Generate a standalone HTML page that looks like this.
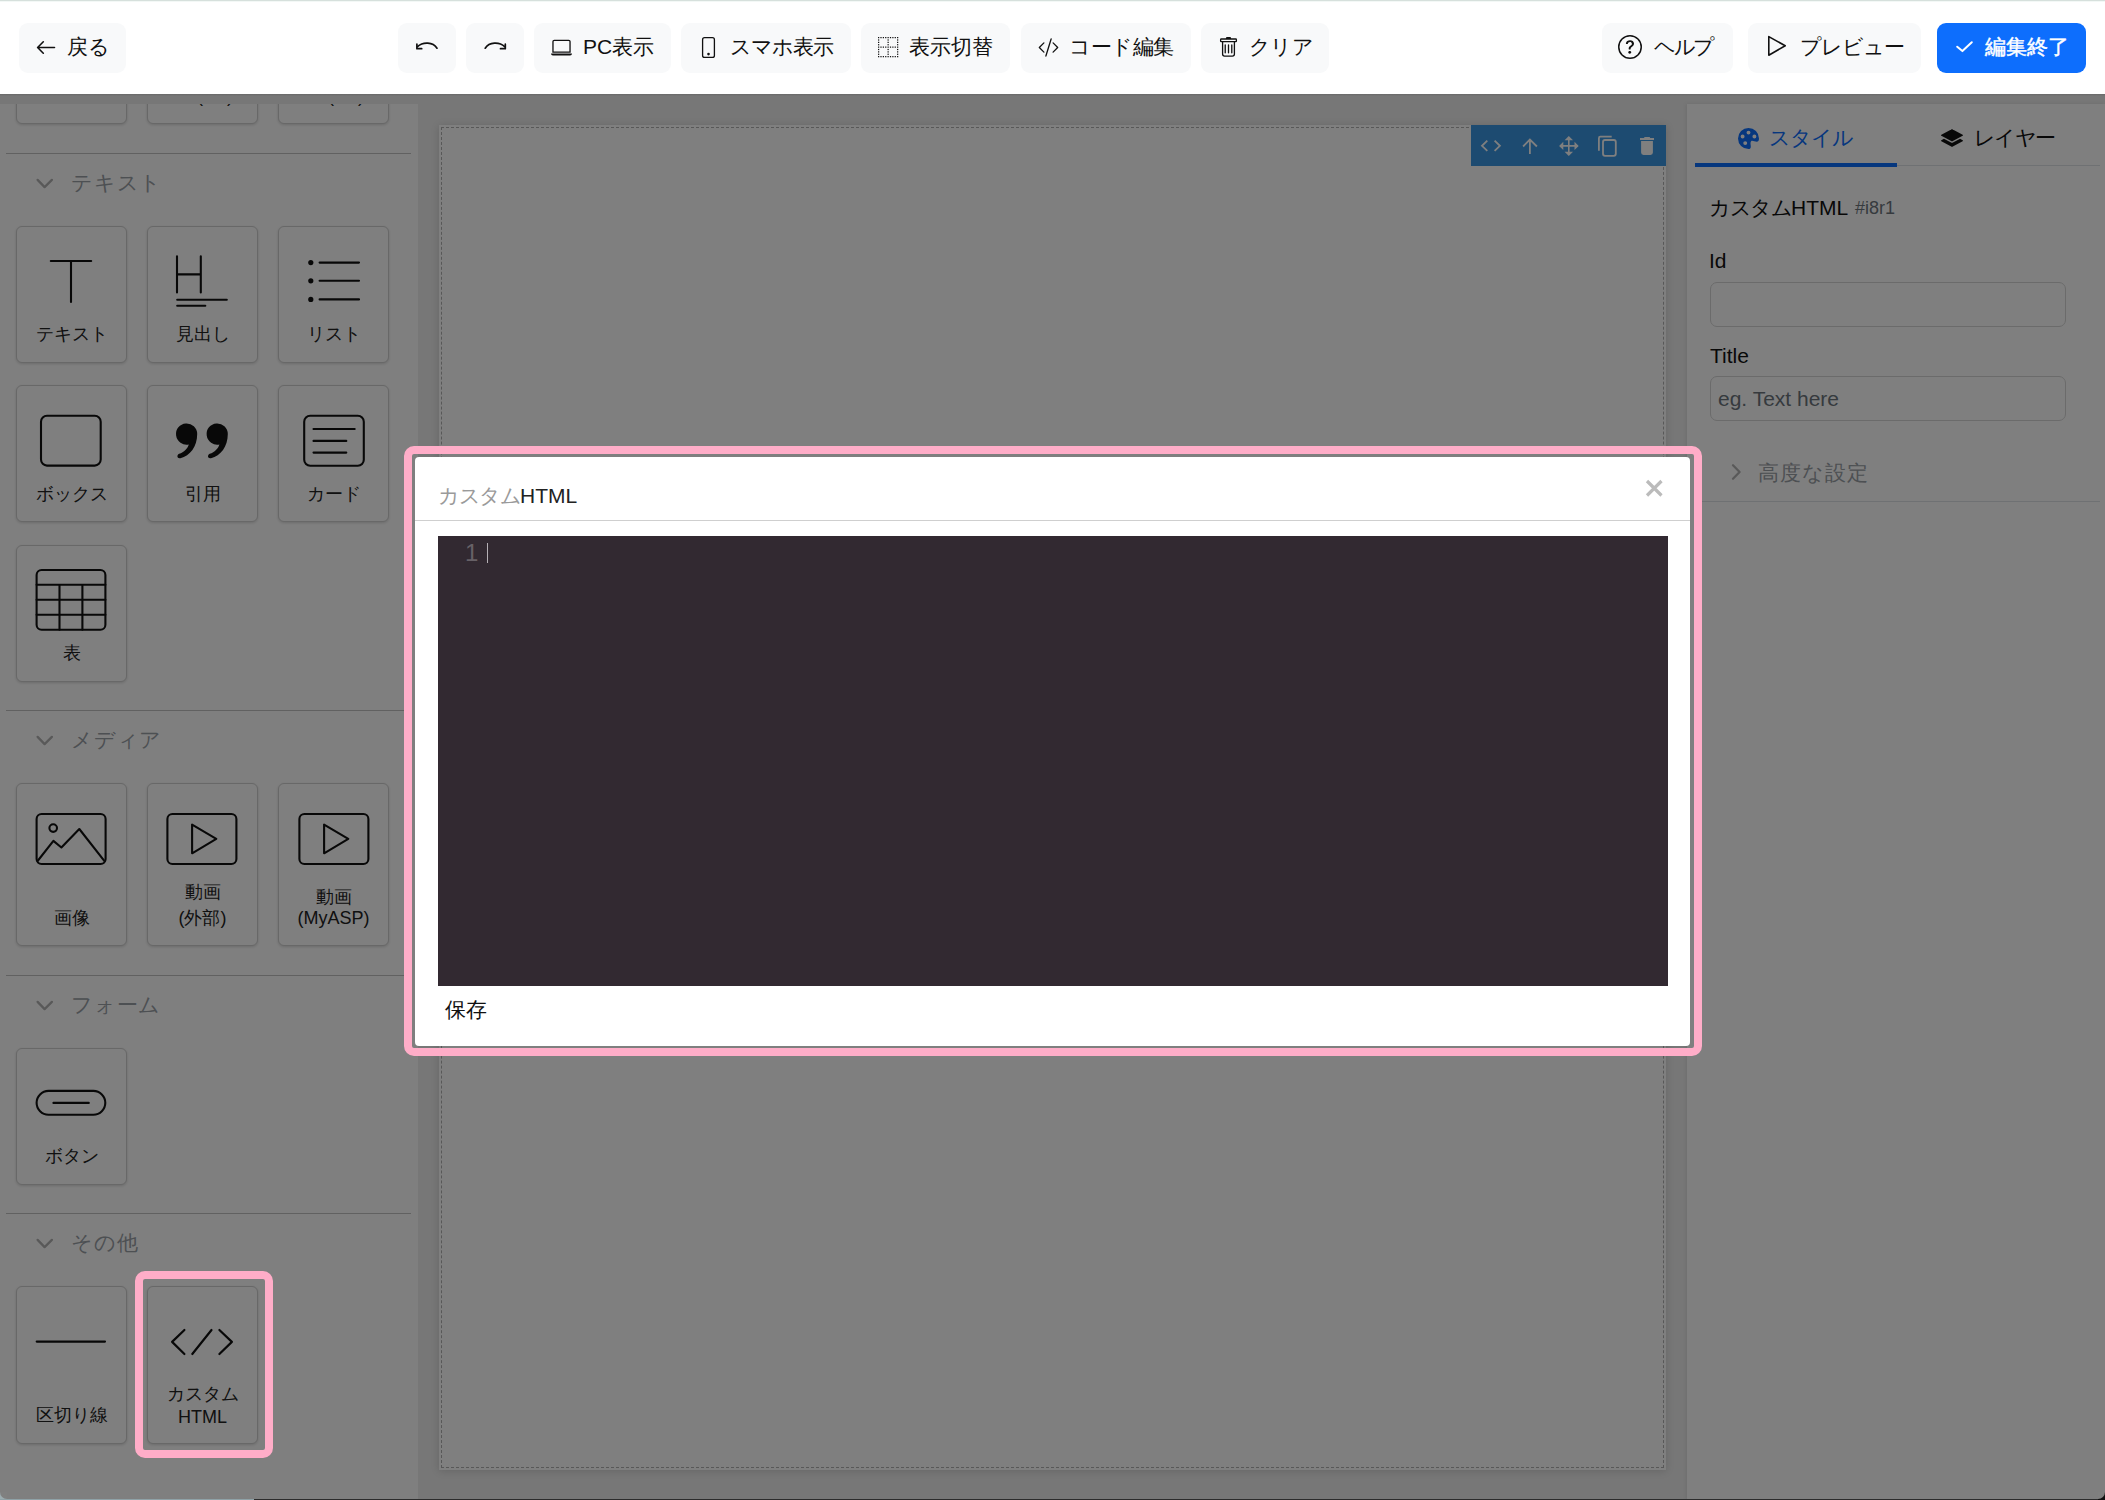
<!DOCTYPE html>
<html lang="ja">
<head>
<meta charset="utf-8">
<style>
*{box-sizing:border-box;margin:0;padding:0}
html,body{width:2105px;height:1500px;overflow:hidden}
body{position:relative;background:#eeeeee;font-family:"Liberation Sans",sans-serif;color:#212529}
.abs{position:absolute}
/* header */
#topline{position:absolute;left:0;top:0;width:2105px;height:2px;background:linear-gradient(#d6e0dc 0,#d6e0dc 1px,#f3f8f6 1px);z-index:5}
#header{position:absolute;left:0;top:0;width:2105px;height:94px;background:#fff}
.btn{position:absolute;top:23px;height:50px;background:#f8f9fa;border-radius:9px}
.btxt{position:absolute;font-size:21px;line-height:24px;white-space:nowrap;color:#111}
.btn svg{position:absolute}
/* sidebar */
#sidebar{position:absolute;left:0;top:104px;width:418px;height:1396px;background:#fff}
.sep{position:absolute;left:6px;width:405px;height:1px;background:#c2c2c2}
.cat{position:absolute;left:71px;letter-spacing:.8px;font-size:21px;line-height:24px;color:#9aa0a6;white-space:nowrap}
.chev{position:absolute;left:36px}
.card{position:absolute;width:111px;background:#fff;border:1px solid #d0d0d0;border-radius:6px;box-shadow:0 1px 3px rgba(0,0,0,.16)}
.lbl{position:absolute;left:0;width:111px;text-align:center;font-size:18px;line-height:22px;color:#222;white-space:nowrap}
.card svg{position:absolute}
/* canvas */
#frame{position:absolute;left:439px;top:125px;width:1227px;height:1345px;background:#fff;box-shadow:0 1px 8px rgba(0,0,0,.15)}
#frame .dash{position:absolute;left:2px;top:2px;right:2px;bottom:2px;border:1px dashed #b0b0b0}
#tb{position:absolute;left:1471px;top:125px;width:195px;height:41px;background:#3b97e3}
#tb svg{position:absolute}
/* right panel */
#rpanel{position:absolute;left:1687px;top:104px;width:418px;height:1396px;background:#fff;box-shadow:-1px 0 4px rgba(0,0,0,.08)}
.inp{position:absolute;left:1710px;width:356px;height:45px;border:1px solid #d6d6d6;border-radius:7px;background:#fff}
/* overlay */
#overlay{position:absolute;left:0;top:94px;width:2105px;height:1406px;background:rgba(0,0,0,.5)}
#hshadow{position:absolute;left:0;top:94px;width:2105px;height:2px;background:linear-gradient(rgba(0,0,0,.12),rgba(0,0,0,0))}
/* modal */
#modal{position:absolute;left:415px;top:457px;width:1275px;height:589px;background:#fff;border-radius:4px}
#editor{position:absolute;left:438px;top:536px;width:1230px;height:450px;background:#322931}
.pink{position:absolute;border:8px solid #ffadc8;border-radius:10px}
</style>
</head>
<body>
<div id="topline"></div>
<div id="header">
 <div class="btn" style="left:19px;width:107px"></div>
 <svg class="abs" style="left:36px;top:40px" width="21" height="15" viewBox="0 0 21 15"><path d="M18.5 7.5H1.8M7.3 1.8L1.6 7.5L7.3 13.2" fill="none" stroke="#111" stroke-width="1.6" stroke-linecap="round" stroke-linejoin="round"/></svg>
 <div class="btxt" style="left:67px;top:35px">戻る</div>

 <div class="btn" style="left:398px;width:58px"></div>
 <svg class="abs" style="left:410px;top:35px" width="32" height="20" viewBox="0 0 32 20"><path d="M27 13.2C23 7 13 6.5 7.5 11.7" fill="none" stroke="#111" stroke-width="1.7" stroke-linecap="round"/><path d="M6.9 9.2V13.7H11.7" fill="none" stroke="#111" stroke-width="1.7" stroke-linecap="round" stroke-linejoin="round"/></svg>
 <div class="btn" style="left:466px;width:58px"></div>
 <svg class="abs" style="left:478px;top:35px" width="32" height="20" viewBox="0 0 32 20"><path d="M7.2 13.2C11.2 7 21.2 6.5 26.7 11.7" fill="none" stroke="#111" stroke-width="1.7" stroke-linecap="round"/><path d="M27.3 9.2V13.7H22.5" fill="none" stroke="#111" stroke-width="1.7" stroke-linecap="round" stroke-linejoin="round"/></svg>

 <div class="btn" style="left:534px;width:137px"></div>
 <svg class="abs" style="left:551.3px;top:37.1px" width="21" height="21" viewBox="0 0 16 16" fill="#111"><path d="M13.5 3a.5.5 0 0 1 .5.5V11H2V3.5a.5.5 0 0 1 .5-.5zm-11-1A1.5 1.5 0 0 0 1 3.5V12h14V3.5A1.5 1.5 0 0 0 13.5 2zM0 12.5h16a1.5 1.5 0 0 1-1.5 1.5h-13A1.5 1.5 0 0 1 0 12.5"/></svg>
 <div class="btxt" style="left:583px;top:35px">PC表示</div>

 <div class="btn" style="left:681px;width:170px"></div>
 <svg class="abs" style="left:698px;top:37px" width="21" height="21" viewBox="0 0 16 16" fill="#111"><path d="M11 1a1 1 0 0 1 1 1v12a1 1 0 0 1-1 1H5a1 1 0 0 1-1-1V2a1 1 0 0 1 1-1zM5 0a2 2 0 0 0-2 2v12a2 2 0 0 0 2 2h6a2 2 0 0 0 2-2V2a2 2 0 0 0-2-2z"/><path d="M8 14a1 1 0 1 0 0-2 1 1 0 0 0 0 2"/></svg>
 <div class="btxt" style="left:730px;top:35px;letter-spacing:-1px">スマホ表示</div>

 <div class="btn" style="left:861px;width:149px"></div>
 <svg class="abs" style="left:877.8px;top:37.2px" width="21" height="21" viewBox="0 0 16 16" fill="#111" id="gridic"><rect x="0.000" y="0.000" width=".94" height=".94"/><rect x="1.812" y="0.000" width=".94" height=".94"/><rect x="3.625" y="0.000" width=".94" height=".94"/><rect x="5.438" y="0.000" width=".94" height=".94"/><rect x="7.250" y="0.000" width=".94" height=".94"/><rect x="9.062" y="0.000" width=".94" height=".94"/><rect x="10.875" y="0.000" width=".94" height=".94"/><rect x="12.688" y="0.000" width=".94" height=".94"/><rect x="14.500" y="0.000" width=".94" height=".94"/><rect x="0.000" y="1.812" width=".94" height=".94"/><rect x="7.250" y="1.812" width=".94" height=".94"/><rect x="14.500" y="1.812" width=".94" height=".94"/><rect x="0.000" y="3.625" width=".94" height=".94"/><rect x="7.250" y="3.625" width=".94" height=".94"/><rect x="14.500" y="3.625" width=".94" height=".94"/><rect x="0.000" y="5.438" width=".94" height=".94"/><rect x="7.250" y="5.438" width=".94" height=".94"/><rect x="14.500" y="5.438" width=".94" height=".94"/><rect x="0.000" y="7.250" width=".94" height=".94"/><rect x="1.812" y="7.250" width=".94" height=".94"/><rect x="3.625" y="7.250" width=".94" height=".94"/><rect x="5.438" y="7.250" width=".94" height=".94"/><rect x="7.250" y="7.250" width=".94" height=".94"/><rect x="9.062" y="7.250" width=".94" height=".94"/><rect x="10.875" y="7.250" width=".94" height=".94"/><rect x="12.688" y="7.250" width=".94" height=".94"/><rect x="14.500" y="7.250" width=".94" height=".94"/><rect x="0.000" y="9.062" width=".94" height=".94"/><rect x="7.250" y="9.062" width=".94" height=".94"/><rect x="14.500" y="9.062" width=".94" height=".94"/><rect x="0.000" y="10.875" width=".94" height=".94"/><rect x="7.250" y="10.875" width=".94" height=".94"/><rect x="14.500" y="10.875" width=".94" height=".94"/><rect x="0.000" y="12.688" width=".94" height=".94"/><rect x="7.250" y="12.688" width=".94" height=".94"/><rect x="14.500" y="12.688" width=".94" height=".94"/><rect x="0.000" y="14.500" width=".94" height=".94"/><rect x="1.812" y="14.500" width=".94" height=".94"/><rect x="3.625" y="14.500" width=".94" height=".94"/><rect x="5.438" y="14.500" width=".94" height=".94"/><rect x="7.250" y="14.500" width=".94" height=".94"/><rect x="9.062" y="14.500" width=".94" height=".94"/><rect x="10.875" y="14.500" width=".94" height=".94"/><rect x="12.688" y="14.500" width=".94" height=".94"/><rect x="14.500" y="14.500" width=".94" height=".94"/></svg>
 <div class="btxt" style="left:909px;top:35px">表示切替</div>

 <div class="btn" style="left:1021px;width:170px"></div>
 <svg class="abs" style="left:1037.5px;top:36.9px" width="21" height="21" viewBox="0 0 16 16" fill="#111"><path d="M10.478 1.647a.5.5 0 1 0-.956-.294l-4 13a.5.5 0 0 0 .956.294zM4.854 4.146a.5.5 0 0 1 0 .708L1.707 8l3.147 3.146a.5.5 0 0 1-.708.708l-3.5-3.5a.5.5 0 0 1 0-.708l3.5-3.5a.5.5 0 0 1 .708 0m6.292 0a.5.5 0 0 0 0 .708L14.293 8l-3.147 3.146a.5.5 0 0 0 .708.708l3.5-3.5a.5.5 0 0 0 0-.708l-3.5-3.5a.5.5 0 0 0-.708 0"/></svg>
 <div class="btxt" style="left:1069px;top:35px;letter-spacing:-.5px">コード編集</div>

 <div class="btn" style="left:1201px;width:128px"></div>
 <svg class="abs" style="left:1217.8px;top:37px" width="21" height="21" viewBox="0 0 16 16" fill="#111"><path d="M5.5 5.5A.5.5 0 0 1 6 6v6a.5.5 0 0 1-1 0V6a.5.5 0 0 1 .5-.5m2.5 0a.5.5 0 0 1 .5.5v6a.5.5 0 0 1-1 0V6a.5.5 0 0 1 .5-.5m3 .5a.5.5 0 0 0-1 0v6a.5.5 0 0 0 1 0z"/><path d="M14.5 3a1 1 0 0 1-1 1H13v9a2 2 0 0 1-2 2H5a2 2 0 0 1-2-2V4h-.5a1 1 0 0 1-1-1V2a1 1 0 0 1 1-1H6a1 1 0 0 1 1-1h2a1 1 0 0 1 1 1h3.5a1 1 0 0 1 1 1zM4.118 4 4 4.059V13a1 1 0 0 0 1 1h6a1 1 0 0 0 1-1V4.059L11.882 4zM2.5 3h11V2h-11z"/></svg>
 <div class="btxt" style="left:1249px;top:35px;letter-spacing:-.7px">クリア</div>

 <div class="btn" style="left:1602px;width:131px"></div>
 <svg class="abs" style="left:1618px;top:34.8px" width="24" height="24" viewBox="0 0 16 16" fill="#111"><path d="M8 15A7 7 0 1 1 8 1a7 7 0 0 1 0 14m0 1A8 8 0 1 0 8 0a8 8 0 0 0 0 16"/><path d="M5.255 5.786a.237.237 0 0 0 .241.247h.825c.138 0 .248-.113.266-.25.09-.656.54-1.134 1.342-1.134.686 0 1.314.343 1.314 1.168 0 .635-.374.927-.965 1.371-.673.489-1.206 1.06-1.168 1.987l.003.217a.25.25 0 0 0 .25.246h.811a.25.25 0 0 0 .25-.25v-.105c0-.718.273-.927 1.01-1.486.609-.463 1.244-.977 1.244-2.056 0-1.511-1.276-2.241-2.673-2.241-1.267 0-2.655.59-2.75 2.286m1.557 5.763c0 .533.425.927 1.01.927.609 0 1.028-.394 1.028-.927 0-.552-.42-.94-1.029-.94-.584 0-1.009.388-1.009.94"/></svg>
 <div class="btxt" style="left:1654px;top:35px;letter-spacing:-2.5px">ヘルプ</div>

 <div class="btn" style="left:1748px;width:173px"></div>
 <svg class="abs" style="left:1766px;top:34px" width="22" height="24" viewBox="0 0 22 24"><path d="M2.8 2.6L19.2 11.8L2.8 21.2Z" fill="none" stroke="#111" stroke-width="1.6" stroke-linejoin="round"/></svg>
 <div class="btxt" style="left:1800px;top:35px;letter-spacing:-1px">プレビュー</div>

 <div class="btn" style="left:1937px;width:149px;background:#0d6efd"></div>
 <svg class="abs" style="left:1954px;top:39px" width="21" height="15" viewBox="0 0 21 15"><path d="M3.2 7.7L8.4 12.1L17.8 3.2" fill="none" stroke="#fff" stroke-width="2" stroke-linecap="round" stroke-linejoin="round"/></svg>
 <div class="btxt" style="left:1985px;top:35px;color:#fff;-webkit-text-stroke:.45px #fff">編集終了</div>
</div>

<div id="sidebar"></div>
<div id="side" style="position:absolute;left:0;top:0;width:420px;height:1500px;clip-path:inset(104px 0 0 0)"><div class="card" style="left:16px;top:-13px;height:137px"></div>
<div class="card" style="left:147px;top:-13px;height:137px"></div>
<div class="card" style="left:278px;top:-13px;height:137px"></div>
<div class="lbl" style="left:147px;top:85px;width:auto;left:197px">(</div><div class="lbl" style="top:85px;width:auto;left:227px">)</div>
<div class="lbl" style="top:85px;width:auto;left:328px">(</div><div class="lbl" style="top:85px;width:auto;left:358px">)</div>
<div class="sep" style="top:153px"></div>
<svg class="abs" style="left:34px;top:177px" width="22" height="14" viewBox="0 0 22 14"><path d="M3.6 2.9L10.6 10.1L17.9 2.9" fill="none" stroke="#b3b3b3" stroke-width="2.3" stroke-linecap="round" stroke-linejoin="round"/></svg>
<div class="cat" style="top:171px">テキスト</div>
<div class="sep" style="top:710px"></div>
<svg class="abs" style="left:34px;top:734px" width="22" height="14" viewBox="0 0 22 14"><path d="M3.6 2.9L10.6 10.1L17.9 2.9" fill="none" stroke="#b3b3b3" stroke-width="2.3" stroke-linecap="round" stroke-linejoin="round"/></svg>
<div class="cat" style="top:728px">メディア</div>
<div class="sep" style="top:975px"></div>
<svg class="abs" style="left:34px;top:999px" width="22" height="14" viewBox="0 0 22 14"><path d="M3.6 2.9L10.6 10.1L17.9 2.9" fill="none" stroke="#b3b3b3" stroke-width="2.3" stroke-linecap="round" stroke-linejoin="round"/></svg>
<div class="cat" style="top:993px">フォーム</div>
<div class="sep" style="top:1213px"></div>
<svg class="abs" style="left:34px;top:1237px" width="22" height="14" viewBox="0 0 22 14"><path d="M3.6 2.9L10.6 10.1L17.9 2.9" fill="none" stroke="#b3b3b3" stroke-width="2.3" stroke-linecap="round" stroke-linejoin="round"/></svg>
<div class="cat" style="top:1231px">その他</div>
<div class="card" style="left:16px;top:226px;height:137px"></div>
<div class="card" style="left:147px;top:226px;height:137px"></div>
<div class="card" style="left:278px;top:226px;height:137px"></div>
<div class="lbl" style="left:16px;top:323px">テキスト</div>
<div class="lbl" style="left:147px;top:323px">見出し</div>
<div class="lbl" style="left:278px;top:323px">リスト</div>
<div class="card" style="left:16px;top:385px;height:137px"></div>
<div class="card" style="left:147px;top:385px;height:137px"></div>
<div class="card" style="left:278px;top:385px;height:137px"></div>
<div class="lbl" style="left:16px;top:483px">ボックス</div>
<div class="lbl" style="left:147px;top:483px">引用</div>
<div class="lbl" style="left:278px;top:483px">カード</div>
<div class="card" style="left:16px;top:545px;height:137px"></div>
<div class="lbl" style="left:16px;top:642px">表</div>
<div class="card" style="left:16px;top:783px;height:163px"></div>
<div class="card" style="left:147px;top:783px;height:163px"></div>
<div class="card" style="left:278px;top:783px;height:163px"></div>
<div class="lbl" style="left:16px;top:907px">画像</div>
<div class="lbl" style="left:147px;top:881px">動画</div>
<div class="lbl" style="left:147px;top:907px">(外部)</div>
<div class="lbl" style="left:278px;top:886px">動画</div>
<div class="lbl" style="left:278px;top:907px">(MyASP)</div>
<div class="card" style="left:16px;top:1048px;height:137px"></div>
<div class="lbl" style="left:16px;top:1145px">ボタン</div>
<div class="card" style="left:16px;top:1286px;height:158px"></div>
<div class="card" style="left:147px;top:1286px;height:158px"></div>
<div class="lbl" style="left:16px;top:1404px">区切り線</div>
<div class="lbl" style="left:147px;top:1383px">カスタム</div>
<div class="lbl" style="left:147px;top:1406px">HTML</div>
<svg class="abs" style="left:0;top:0" width="420" height="1500" viewBox="0 0 420 1500"><path d="M50.8 261H91.2M71 261V302" fill="none" stroke="#111" stroke-width="2.1" stroke-linecap="round" stroke-linejoin="round"/><path d="M177 256.3V292.5M200.8 256.3V292.5M177 274.4H200.8M177.2 299.8H226.8M177.2 305.7H205.3" fill="none" stroke="#111" stroke-width="2.1" stroke-linecap="round" stroke-linejoin="round"/><circle cx="310.8" cy="262.6" r="2.6" fill="#111"/><circle cx="310.8" cy="280.8" r="2.6" fill="#111"/><circle cx="310.8" cy="299.4" r="2.6" fill="#111"/><path d="M319.6 262.6H359M319.6 280.8H359M319.6 299.4H359" fill="none" stroke="#111" stroke-width="2.1" stroke-linecap="round" stroke-linejoin="round"/><rect x="41" y="415.8" width="59.7" height="49.8" rx="6" fill="none" stroke="#111" stroke-width="2.1" stroke-linecap="round" stroke-linejoin="round"/><path fill="#111" d="M197.2 434 A10.6 10.6 0 1 0 188.79999999999998 444.4 C187.6 448.5 184.1 452 179.1 453.8 C176.4 455 177.0 459 180.4 458.2 C190.1 456 197.2 446.5 197.2 434 Z"/><path fill="#111" d="M227.79999999999998 434 A10.6 10.6 0 1 0 219.39999999999998 444.4 C218.2 448.5 214.7 452 209.7 453.8 C207.0 455 207.6 459 211.0 458.2 C220.7 456 227.79999999999998 446.5 227.79999999999998 434 Z"/><rect x="304.2" y="415.8" width="59.6" height="50" rx="6" fill="none" stroke="#111" stroke-width="2.1" stroke-linecap="round" stroke-linejoin="round"/><path d="M313.5 429H354.7M313.5 440.9H346.3M313.5 452.6H346.3" fill="none" stroke="#111" stroke-width="2.1" stroke-linecap="round" stroke-linejoin="round"/><rect x="36.6" y="570" width="68.8" height="59.7" rx="5" fill="none" stroke="#111" stroke-width="2.1" stroke-linecap="round" stroke-linejoin="round"/><path d="M36.6 584.8H105.4M36.6 599.7H105.4M36.6 614.7H105.4M59.5 584.8V629.7M82.4 584.8V629.7" fill="none" stroke="#111" stroke-width="2.1" stroke-linecap="round" stroke-linejoin="round"/><rect x="36.6" y="814" width="69" height="50" rx="5" fill="none" stroke="#111" stroke-width="2.1" stroke-linecap="round" stroke-linejoin="round"/><circle cx="53.2" cy="828.1" r="3.8" fill="none" stroke="#111" stroke-width="2.1" stroke-linecap="round" stroke-linejoin="round"/><path d="M37.6 861L53.4 840.9L61.4 847.5L79.3 829L104.5 861.2" fill="none" stroke="#111" stroke-width="2.1" stroke-linecap="round" stroke-linejoin="round"/><rect x="167.4" y="814" width="69" height="50" rx="5" fill="none" stroke="#111" stroke-width="2.1" stroke-linecap="round" stroke-linejoin="round"/><path d="M192.1 824.6V853.3L216.3 838.8Z" fill="none" stroke="#111" stroke-width="2.1" stroke-linecap="round" stroke-linejoin="round"/><rect x="299.4" y="814" width="69" height="50" rx="5" fill="none" stroke="#111" stroke-width="2.1" stroke-linecap="round" stroke-linejoin="round"/><path d="M324.1 824.6V853.3L348.3 838.8Z" fill="none" stroke="#111" stroke-width="2.1" stroke-linecap="round" stroke-linejoin="round"/><rect x="36.6" y="1090.9" width="68.7" height="23.8" rx="11.9" fill="none" stroke="#111" stroke-width="2.1" stroke-linecap="round" stroke-linejoin="round"/><path d="M53.4 1102.9H88.8" fill="none" stroke="#111" stroke-width="2.1" stroke-linecap="round" stroke-linejoin="round"/><path d="M36.7 1341.6H105" fill="none" stroke="#111" stroke-width="2.1" stroke-linecap="round" stroke-linejoin="round"/><path d="M184.4 1330L172.1 1341.9L184.4 1354M211.5 1330L192.3 1354M219.4 1330L231.9 1341.9L219.4 1354" fill="none" stroke="#111" stroke-width="2.2" stroke-linecap="round" stroke-linejoin="round"/></svg></div>
<div id="frame"><div class="dash"></div></div>
<div id="tb"></div>
<svg class="abs" style="left:0;top:0" width="2105" height="200" viewBox="0 0 2105 200">
<path d="M1487.3 140.7L1482 145.8L1487.3 150.9M1494.6 140.7L1499.9 145.8L1494.6 150.9" fill="none" stroke="#fff" stroke-width="1.8" stroke-linecap="butt" stroke-linejoin="miter"/>
<path d="M1529.9 139.5V154M1523.1 146.5L1529.9 139.5L1536.9 146.5" fill="none" stroke="#fff" stroke-width="1.8" stroke-linecap="butt" stroke-linejoin="miter"/>
<path d="M1560 145.9H1578M1568.8 137V155" fill="none" stroke="#fff" stroke-width="1.6"/>
<path fill="#fff" d="M1568.8 136L1573 140.2H1564.6ZM1568.8 155.9L1573 151.7H1564.6ZM1559.1 145.9L1563.3 141.7V150.1ZM1578.7 145.9L1574.5 141.7V150.1Z"/>
<path d="M1598.9 150.7V138.2Q1598.9 136.7 1600.4 136.7H1611.7" fill="none" stroke="#fff" stroke-width="1.8" stroke-linecap="butt" stroke-linejoin="miter"/>
<rect x="1603" y="140" width="12.8" height="15.8" rx="2" fill="none" stroke="#fff" stroke-width="1.8" stroke-linecap="butt" stroke-linejoin="miter"/>
<path fill="#fff" d="M1640 138H1644L1644.6 137.1H1649.6L1650.2 138H1654V139.9H1640ZM1641.1 141H1652.9V152.6Q1652.9 155 1650.5 155H1643.5Q1641.1 155 1641.1 152.6Z"/>
</svg>
<div id="rpanel"></div>
<div class="abs" style="left:1695px;top:163px;width:202px;height:4px;background:#0d6efd"></div>
<div class="abs" style="left:1897px;top:165px;width:203px;height:1px;background:#dee2e6"></div>
<svg class="abs" style="left:1738px;top:128px" width="21" height="21" viewBox="0 0 16 16" fill="#0d6efd"><path d="M12.433 10.07C14.133 10.585 16 11.15 16 8a8 8 0 1 0-8 8c1.996 0 1.826-1.504 1.649-3.08-.124-1.101-.252-2.237.351-2.92.465-.527 1.42-.237 2.433.07M8 5a1.5 1.5 0 1 1 0-3 1.5 1.5 0 0 1 0 3m4.5 3a1.5 1.5 0 1 1 0-3 1.5 1.5 0 0 1 0 3M5 6.5a1.5 1.5 0 1 1-3 0 1.5 1.5 0 0 1 3 0m.5 6.5a1.5 1.5 0 1 1 0-3 1.5 1.5 0 0 1 0 3"/></svg>
<div class="btxt" style="left:1769px;top:126px;color:#0d6efd;letter-spacing:-1.1px">スタイル</div>
<svg class="abs" style="left:1940.6px;top:127px" width="22" height="22" viewBox="0 0 16 16" fill="#111"><path d="M7.765 1.559a.5.5 0 0 1 .47 0l7.5 4a.5.5 0 0 1 0 .882l-7.5 4a.5.5 0 0 1-.47 0l-7.5-4a.5.5 0 0 1 0-.882z"/><path d="m2.125 8.567-1.86.992a.5.5 0 0 0 0 .882l7.5 4a.5.5 0 0 0 .47 0l7.5-4a.5.5 0 0 0 0-.882l-1.86-.992-5.17 2.756a1.5 1.5 0 0 1-1.41 0z"/></svg>
<div class="btxt" style="left:1974px;top:126px;letter-spacing:-1.7px">レイヤー</div>
<div class="btxt" style="left:1709px;top:196px"><span style="letter-spacing:-1.5px">カスタム</span>HTML</div><div class="btxt" style="left:1855px;top:196px;font-size:18px;color:#6c757d">#i8r1</div>
<div class="btxt" style="left:1709px;top:249px">Id</div>
<div class="inp" style="top:282px"></div>
<div class="btxt" style="left:1710px;top:344px">Title</div>
<div class="inp" style="top:376px"></div>
<div class="btxt" style="left:1718px;top:387px;color:#6c757d">eg. Text here</div>
<svg class="abs" style="left:1728px;top:462px" width="18" height="20" viewBox="0 0 18 20"><path d="M5 3.3L11.6 10L5 16.7" fill="none" stroke="#b3b3b3" stroke-width="2.3" stroke-linecap="round" stroke-linejoin="round"/></svg>
<div class="cat" style="left:1758px;top:461px;letter-spacing:1px">高度な設定</div>
<div class="abs" style="left:1700px;top:501px;width:400px;height:1px;background:#dee2e6"></div>

<div id="overlay"></div>
<div id="hshadow"></div>

<div id="modal"></div>
<div class="abs" style="left:415px;top:520px;width:1275px;height:1px;background:#cfcfcf"></div>
<div class="btxt" style="left:438px;top:484px;color:#222"><span style="color:#9a9a9a;letter-spacing:-1.5px">カスタム</span>HTML</div>
<svg class="abs" style="left:1640px;top:474px" width="28" height="28" viewBox="0 0 28 28"><path d="M7 7L21.5 21.5M21.5 7L7 21.5" stroke="#bbb" stroke-width="3.2"/></svg>
<div id="editor"></div>
<div class="abs" style="left:465px;top:539px;font-size:24px;line-height:28px;color:#676167">1</div>
<div class="abs" style="left:487px;top:543px;width:1px;height:20px;background:#b5b0b5"></div>
<div class="btxt" style="left:445px;top:998px">保存</div>
<div class="pink" style="left:404px;top:446px;width:1298px;height:610px"></div>
<div class="pink" style="left:135px;top:1271px;width:138px;height:187px"></div>
<div class="abs" style="left:0;top:1499px;width:254px;height:1px;background:#8fa2a7"></div>
<div class="abs" style="left:254px;top:1499px;width:1851px;height:1px;background:#2c2c2c"></div>
<div class="abs" style="left:0;top:1492px;width:7px;height:7px;background:#9cacb0"><div style="width:7px;height:7px;background:#808080;border-bottom-left-radius:7px"></div></div>
<div class="abs" style="left:2098px;top:1492px;width:7px;height:8px;background:#111"><div style="width:7px;height:7px;background:#808080;border-bottom-right-radius:7px"></div></div>
</body>
</html>
